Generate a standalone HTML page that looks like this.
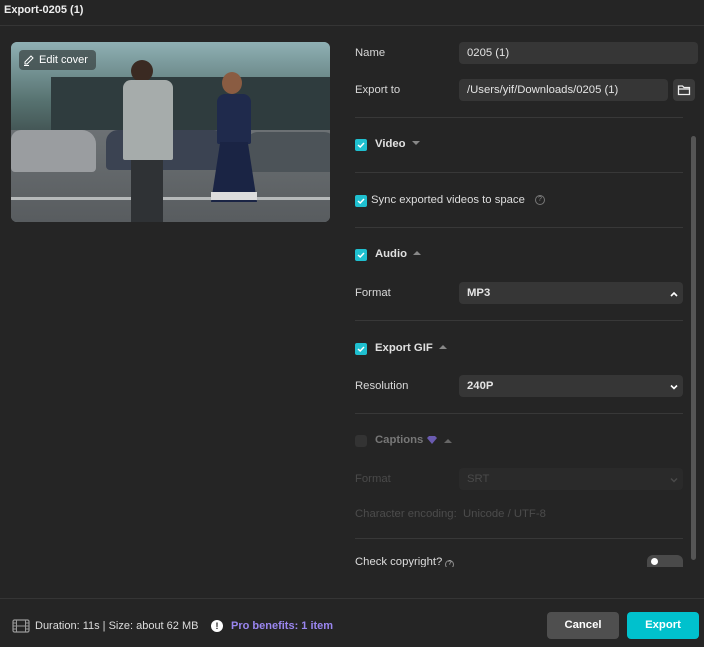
<!DOCTYPE html>
<html><head><meta charset="utf-8"><style>
*{box-sizing:border-box;margin:0;padding:0}
body{width:704px;height:647px;background:#252525;font-family:"Liberation Sans",sans-serif;color:#e6e6e6;position:relative;overflow:hidden;font-size:11.3px}
.a{position:absolute}
.title{left:4px;top:4px;font-size:11px;font-weight:bold;color:#eee}
.hr{height:1px;background:#383838}
.lbl{left:355px;font-size:11.3px;color:#d8d8d8}
.inp{background:#363636;border-radius:4px;height:22px;padding-left:8px;line-height:22px;font-size:11.3px;color:#e4e4e4}
.cb{width:12px;height:12px;border-radius:2px;background:#1fc0d0}
.cb svg{display:block}
.sec{font-size:11.3px;font-weight:bold;color:#e0e0e0}
.tri{display:inline-block;width:0;height:0;border-left:4px solid transparent;border-right:4px solid transparent;margin-left:6px;vertical-align:2px}
.up{border-bottom:4px solid #888}.dn{border-top:4px solid #888}
</style></head><body>
<div class="a title">Export-0205 (1)</div>
<div class="a hr" style="left:0;top:25px;width:704px;background:#353535"></div>

<div class="a" style="left:11px;top:42px;width:319px;height:180px;border-radius:6px;overflow:hidden;background:#6f7c80">
 <div class="a" style="left:0;top:0;width:319px;height:100px;background:linear-gradient(180deg,#8fb0b4,#56716f 60%,#3d4c4c)"></div>
 <div class="a" style="left:40px;top:35px;width:280px;height:60px;background:#2f3c3e"></div>
 <div class="a" style="left:0;top:88px;width:319px;height:92px;background:linear-gradient(180deg,#6c7174,#585c5f)"></div>
 <div class="a" style="left:0;top:88px;width:85px;height:42px;background:#9a9da0;border-radius:10px 14px 4px 4px"></div>
 <div class="a" style="left:95px;top:88px;width:120px;height:40px;background:#3b4352;border-radius:12px 12px 4px 4px"></div>
 <div class="a" style="left:235px;top:90px;width:90px;height:40px;background:#4c5358;border-radius:12px 12px 4px 4px"></div>
 <div class="a" style="left:0;top:155px;width:319px;height:3px;background:#b6b9ba"></div>
 <div class="a" style="left:120px;top:18px;width:22px;height:22px;background:#3a2a22;border-radius:50%"></div>
 <div class="a" style="left:112px;top:38px;width:50px;height:80px;background:#a6acab;border-radius:8px 8px 2px 2px"></div>
 <div class="a" style="left:120px;top:118px;width:32px;height:62px;background:#2f3235"></div>
 <div class="a" style="left:211px;top:30px;width:20px;height:22px;background:#8a5c42;border-radius:50%"></div>
 <div class="a" style="left:206px;top:52px;width:34px;height:50px;background:#1f2a4c;border-radius:8px 8px 2px 2px"></div>
 <div class="a" style="left:200px;top:100px;width:46px;height:60px;background:#1a2444;clip-path:polygon(20% 0,80% 0,100% 100%,0 100%)"></div>
 <div class="a" style="left:200px;top:150px;width:46px;height:8px;background:#ddd"></div>
 <div class="a" style="left:8px;top:8px;width:77px;height:20px;background:rgba(60,70,70,.75);border-radius:4px;color:#fff;font-size:11px;line-height:20px;padding-left:20px">Edit cover</div>
 <svg class="a" style="left:12px;top:12px" width="12" height="12" viewBox="0 0 12 12"><path d="M2 10 L2 8 L8 2 L10 4 L4 10 Z M1 11.5 H6" stroke="#fff" fill="none" stroke-width="1"/></svg>
</div>

<div class="a lbl" style="top:47px">Name</div>
<div class="a inp" style="left:459px;top:42px;width:239px">0205 (1)</div>
<div class="a lbl" style="top:84px">Export to</div>
<div class="a inp" style="left:459px;top:79px;width:209px">/Users/yif/Downloads/0205 (1)</div>
<div class="a" style="left:673px;top:79px;width:22px;height:22px;background:#3a3a3a;border-radius:4px"></div>
<svg class="a" style="left:677px;top:84px" width="14" height="12" viewBox="0 0 14 12"><path d="M1.5 2 H5.5 L7 3.5 H12.5 V10.5 H1.5 Z M1.5 5 H12.5" stroke="#eee" fill="none" stroke-width="1.3"/></svg>
<div class="a hr" style="left:355px;top:117px;width:328px"></div>

<div class="a" style="left:691px;top:136px;width:5px;height:424px;background:#555;border-radius:3px"></div>

<div class="a cb" style="left:355px;top:139px"><svg width="12" height="12"><path d="M3 6 L5.2 8 L9 4" stroke="#fff" stroke-width="1.5" fill="none"/></svg></div>
<div class="a sec" style="left:375px;top:138px">Video<span class="tri dn"></span></div>
<div class="a hr" style="left:355px;top:172px;width:328px"></div>

<div class="a cb" style="left:355px;top:195px"><svg width="12" height="12"><path d="M3 6 L5.2 8 L9 4" stroke="#fff" stroke-width="1.5" fill="none"/></svg></div>
<div class="a" style="left:371px;top:194px;color:#ddd">Sync exported videos to space</div>
<div class="a" style="left:535px;top:195px;width:10px;height:10px;border:1px solid #777;border-radius:50%;font-size:7px;line-height:8px;text-align:center;color:#888">?</div>
<div class="a hr" style="left:355px;top:227px;width:328px"></div>

<div class="a cb" style="left:355px;top:249px"><svg width="12" height="12"><path d="M3 6 L5.2 8 L9 4" stroke="#fff" stroke-width="1.5" fill="none"/></svg></div>
<div class="a sec" style="left:375px;top:248px">Audio<span class="tri up"></span></div>
<div class="a lbl" style="top:287px">Format</div>
<div class="a inp" style="left:459px;top:282px;width:224px;font-weight:bold">MP3</div>
<svg class="a" style="left:669px;top:290px" width="10" height="8"><path d="M2 6 L5 3 L8 6" stroke="#fff" stroke-width="1.6" fill="none"/></svg>
<div class="a hr" style="left:355px;top:320px;width:328px"></div>

<div class="a cb" style="left:355px;top:343px"><svg width="12" height="12"><path d="M3 6 L5.2 8 L9 4" stroke="#fff" stroke-width="1.5" fill="none"/></svg></div>
<div class="a sec" style="left:375px;top:342px">Export GIF<span class="tri up"></span></div>
<div class="a lbl" style="top:380px">Resolution</div>
<div class="a inp" style="left:459px;top:375px;width:224px;font-weight:bold">240P</div>
<svg class="a" style="left:669px;top:383px" width="10" height="8"><path d="M2 2.5 L5 5.5 L8 2.5" stroke="#fff" stroke-width="1.6" fill="none"/></svg>
<div class="a hr" style="left:355px;top:413px;width:328px"></div>

<div class="a" style="left:355px;top:435px;width:12px;height:12px;border-radius:3px;background:#333"></div>
<div class="a sec" style="left:375px;top:434px;color:#777">Captions</div>
<svg class="a" style="left:426px;top:435px" width="12" height="10"><path d="M1 3 L3 1 H9 L11 3 L6 9 Z" fill="#6a5bb0"/></svg>
<span class="a tri up" style="left:438px;top:439px;border-bottom-color:#666"></span>
<div class="a lbl" style="top:473px;color:#4a4a4a">Format</div>
<div class="a inp" style="left:459px;top:468px;width:224px;background:#2a2a2a;color:#4a4a4a">SRT</div>
<svg class="a" style="left:669px;top:476px" width="10" height="8"><path d="M2 2.5 L5 5.5 L8 2.5" stroke="#4a4a4a" stroke-width="1.4" fill="none"/></svg>
<div class="a lbl" style="top:508px;color:#4c4c4c">Character encoding:&nbsp; Unicode / UTF-8</div>
<div class="a hr" style="left:355px;top:538px;width:328px"></div>

<div class="a" style="left:355px;top:556px;width:340px;height:11px;overflow:hidden"><span style="color:#ddd;font-size:11.3px;line-height:13px">Check copyright? <span style="display:inline-block;width:9px;height:9px;border:1px solid #888;border-radius:50%;font-size:6px;line-height:7px;text-align:center;vertical-align:0">?</span></span></div>
<div class="a" style="left:647px;top:555px;width:36px;height:12px;border-radius:6px 6px 0 0;background:#4a4a4a;overflow:hidden"><div style="position:absolute;left:4px;top:3px;width:7px;height:7px;border-radius:50%;background:#fff"></div></div>

<div class="a hr" style="left:0;top:598px;width:704px;background:#353535"></div>
<svg class="a" style="left:12px;top:619px" width="18" height="14" viewBox="0 0 18 14"><rect x="1" y="1" width="16" height="12" rx="1.5" fill="none" stroke="#999" stroke-width="1.2"/><path d="M4.5 1 V13 M13.5 1 V13 M4.5 7 H13.5 M1 4 H4.5 M1 7 H4.5 M1 10 H4.5 M13.5 4 H17 M13.5 7 H17 M13.5 10 H17" stroke="#999" stroke-width="1"/></svg>
<div class="a" style="left:35px;top:620px;color:#ddd;font-size:11px">Duration: 11s | Size: about 62 MB</div>
<div class="a" style="left:211px;top:620px;width:12px;height:12px;border-radius:50%;background:#fff;color:#222;font-size:9px;font-weight:bold;text-align:center;line-height:12px">!</div>
<div class="a" style="left:231px;top:620px;color:#9a86f0;font-weight:bold;font-size:11px">Pro benefits: 1 item</div>

<div class="a" style="left:547px;top:612px;width:72px;height:27px;border-radius:4px;background:#4f4f4f;color:#fff;font-weight:bold;text-align:center;line-height:27px">Cancel</div>
<div class="a" style="left:627px;top:612px;width:72px;height:27px;border-radius:4px;background:#00c1cd;color:#fff;font-weight:bold;text-align:center;line-height:27px">Export</div>
</body></html>
